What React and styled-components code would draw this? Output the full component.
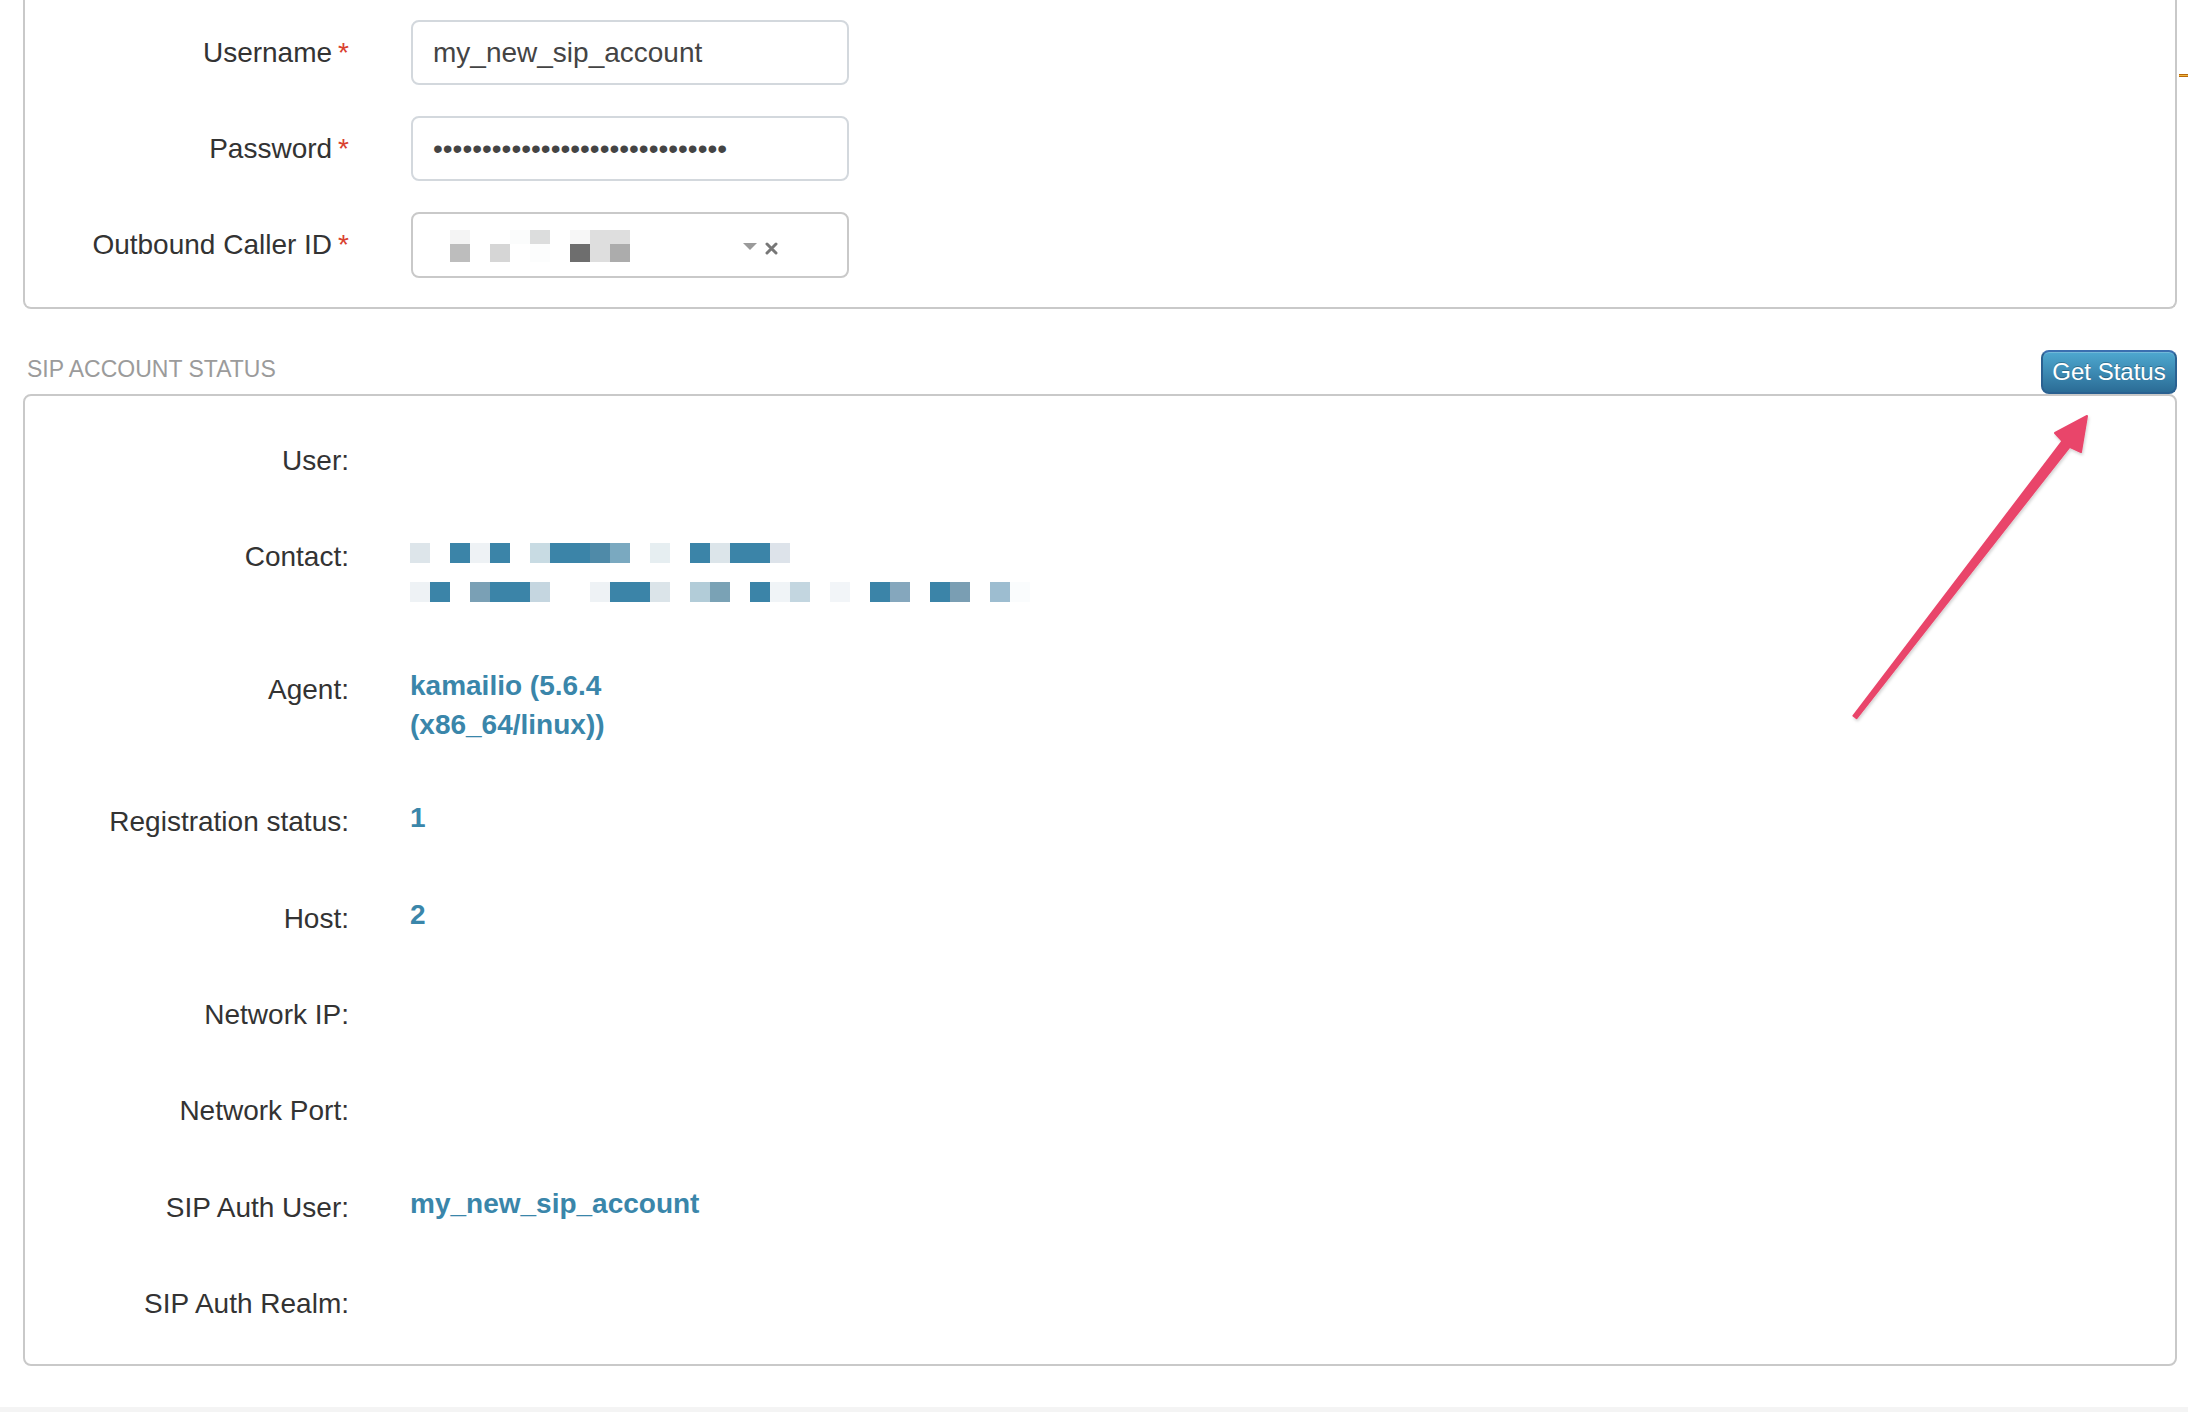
import React from "react";
import styled, { createGlobalStyle, css } from "styled-components";

const GlobalStyle = createGlobalStyle`
    body {
        margin: 0;
        background: #fff;
        font-family: "Liberation Sans", Arial, Helvetica, sans-serif;
        color: #333;
    }
`;

const Page = styled.div`
    position: relative;
    width: 2188px;
    min-height: 1412px;
    overflow: hidden;
`;

const Content = styled.div`
    padding: 0 11px 0 23px;
`;

const Card = styled.div`
    border: 2px solid #c9c9c9;
    border-radius: 8px;
    padding: ${({ $pad }) => $pad};
    ${({ $cutTop }) => $cutTop && css`
        border-top: none;
        border-top-left-radius: 0;
        border-top-right-radius: 0;
    `}
`;

const FormStack = styled.div`
    display: flex;
    flex-direction: column;
    gap: 31px;
`;

const FormRow = styled.div`
    display: grid;
    grid-template-columns: 324px 438px;
    column-gap: 62px;
    align-items: center;
    height: ${({ $h }) => $h}px;
`;

const Label = styled.label`
    text-align: right;
    font-size: 28px;
    line-height: 40px;
    color: #333;
`;

const Required = styled.span`
    color: #d9412f;
    margin-left: 6px;
`;

const TextInput = styled.input`
    box-sizing: border-box;
    width: 438px;
    height: 100%;
    border: 2px solid #d3d8dd;
    border-radius: 8px;
    padding: 0 20px;
    font-family: "Liberation Sans", Arial, sans-serif;
    font-size: 28px;
    color: #444;
    background: #fff;
    outline: none;
`;

const SelectBox = styled.div`
    box-sizing: border-box;
    height: 100%;
    border: 2px solid #c9c9c9;
    border-radius: 8px;
    display: flex;
    align-items: center;
    padding: 0 0 0 37px;
`;

const Mosaic = styled.div`
    display: flex;
    flex-direction: column;
    margin-top: 2px;
`;

const MosaicLine = styled.div`
    display: flex;
    height: ${({ $h }) => $h}px;
`;

const Cell = styled.span`
    width: 20px;
    height: 100%;
    background: ${({ $c }) => $c};
`;

const Caret = styled.span`
    margin-left: 113px;
    margin-top: 2px;
    width: 0;
    height: 0;
    border-left: 7px solid transparent;
    border-right: 7px solid transparent;
    border-top: 7px solid #9a9a9a;
`;

const Clear = styled.svg`
    margin-left: 8px;
    margin-top: 6px;
`;

const SectionHeader = styled.div`
    display: flex;
    justify-content: space-between;
    align-items: center;
    margin: 41px 0 0;
`;

const SectionTitle = styled.h3`
    margin: 0 0 6px 4px;
    font-size: 23px;
    font-weight: normal;
    color: #9b9b9b;
    text-transform: uppercase;
`;

const StatusButton = styled.button`
    box-sizing: border-box;
    height: 44px;
    width: 136px;
    padding: 0;
    border: 2px solid #2a6191;
    border-top-color: #3a6fb0;
    border-radius: 8px;
    background: linear-gradient(#4ea8d0, #2b6c96);
    color: #fff;
    font-family: "Liberation Sans", Arial, sans-serif;
    font-size: 24px;
    text-shadow: 0 -1px 0 rgba(0, 0, 0, 0.25);
    box-shadow: inset 0 1px 0 rgba(255, 255, 255, 0.2);
`;

const StatusRow = styled.div`
    display: grid;
    grid-template-columns: 324px 1fr;
    column-gap: 61px;
    min-height: 60px;
    margin-bottom: 36.4px;

    &:last-child {
        margin-bottom: 0;
    }
`;

const StatusLabel = styled(Label)`
    padding-top: 10px;
`;

const Value = styled.div`
    padding: 6px 0 12px;
    font-size: 28px;
    line-height: 39px;
    font-weight: bold;
    color: #3a86aa;
`;

const ContactLine = styled.div`
    display: flex;
    align-items: center;
    height: 39px;
`;

const ContactCell = styled.span`
    width: 20px;
    height: 20px;
    background: ${({ $c }) => $c};
`;

const Footer = styled.div`
    margin-top: 41px;
    height: 10px;
    background: #f4f4f4;
`;

const EdgeMark = styled.span`
    position: absolute;
    top: 74px;
    left: 2179px;
    width: 9px;
    height: 1px;
    background: #f0b840;
    border-top: 1px solid #b8680c;
    border-bottom: 1px solid #b8680c;
`;

const ArrowLayer = styled.svg`
    position: absolute;
    left: 0;
    top: 0;
    pointer-events: none;
`;

const W = "#ffffff";
const D = "#3b84a8";

const selectTop = ["#f4f4f4", W, W, "#fbfcfc", "#dcdddd", W, "#f7f7f7", "#dedede", "#dedede"];
const selectBottom = ["#bdbdbd", W, "#d6d6d6", W, "#fcfdfd", W, "#6e6e6e", "#dedede", "#acacac"];

const contactOne = [
    "#dde5ea", W, D, "#eef2f5", D, W, "#c8dbe3", D, D, "#4f8aa8",
    "#7aa9c0", W, "#e6eef1", W, D, "#dce5ea", D, D, "#dde3ea",
];
const contactTwo = [
    "#eef2f5", D, W, "#7aa0b5", D, D, "#c5d6e0", W, W, "#eef2f5",
    D, D, "#dbe4e9", W, "#b2ccd8", "#7aa2b5", W, D, "#f0f4f7", "#c3d6e0",
    W, "#f2f5f8", W, D, "#85a7bd", W, D, "#7a9eb3", W, "#9dbdd0", "#fafcfd",
];

function Field({ label, h, children }) {
    return (
        <FormRow $h={h}>
            <Label>
                {label}
                <Required>*</Required>
            </Label>
            {children}
        </FormRow>
    );
}

function Status({ label, children }) {
    return (
        <StatusRow>
            <StatusLabel>{label}</StatusLabel>
            <Value>{children}</Value>
        </StatusRow>
    );
}

function Arrow() {
    return (
        <ArrowLayer width="2188" height="1412" viewBox="0 0 2188 1412">
            <defs>
                <filter id="arrowShadow" x="-10%" y="-10%" width="120%" height="120%">
                    <feDropShadow dx="1" dy="2" stdDeviation="1.5" floodColor="#000" floodOpacity="0.18" />
                </filter>
            </defs>
            <polygon
                points="1853.4,715.8 2062.4,441.2 2055,433 2087,416 2081,452 2069.6,446.8 1856.6,718.2"
                fill="#e9456b"
                stroke="#e9456b"
                strokeWidth="2"
                strokeLinejoin="round"
                filter="url(#arrowShadow)"
            />
        </ArrowLayer>
    );
}

export default function App() {
    return (
        <Page>
            <GlobalStyle />
            <Content>
                <Card $cutTop $pad="20px 0 29px">
                    <FormStack>
                        <Field label="Username" h={65}>
                            <TextInput readOnly value="my_new_sip_account" />
                        </Field>
                        <Field label="Password" h={65}>
                            <TextInput readOnly type="password" value="abcdefghijklmnopqrstuvwxyz1234" />
                        </Field>
                        <Field label="Outbound Caller ID" h={66}>
                            <SelectBox>
                                <Mosaic>
                                    <MosaicLine $h={14}>
                                        {selectTop.map((c, i) => <Cell key={i} $c={c} />)}
                                    </MosaicLine>
                                    <MosaicLine $h={18}>
                                        {selectBottom.map((c, i) => <Cell key={i} $c={c} />)}
                                    </MosaicLine>
                                </Mosaic>
                                <Caret />
                                <Clear width="13" height="13" viewBox="0 0 13 13">
                                    <path d="M2 2 L11 11 M11 2 L2 11" stroke="#777" strokeWidth="3" strokeLinecap="round" />
                                </Clear>
                            </SelectBox>
                        </Field>
                    </FormStack>
                </Card>

                <SectionHeader>
                    <SectionTitle>SIP Account Status</SectionTitle>
                    <StatusButton type="button">Get Status</StatusButton>
                </SectionHeader>

                <Card $pad="35px 0 30px">
                    <Status label="User:" />
                    <Status label="Contact:">
                        <ContactLine>
                            {contactOne.map((c, i) => <ContactCell key={i} $c={c} />)}
                        </ContactLine>
                        <ContactLine>
                            {contactTwo.map((c, i) => <ContactCell key={i} $c={c} />)}
                        </ContactLine>
                    </Status>
                    <Status label="Agent:">
                        kamailio (5.6.4
                        <br />
                        (x86_64/linux))
                    </Status>
                    <Status label="Registration status:">1</Status>
                    <Status label="Host:">2</Status>
                    <Status label="Network IP:" />
                    <Status label="Network Port:" />
                    <Status label="SIP Auth User:">my_new_sip_account</Status>
                    <Status label="SIP Auth Realm:" />
                </Card>
            </Content>
            <Footer />
            <EdgeMark />
            <Arrow />
        </Page>
    );
}
